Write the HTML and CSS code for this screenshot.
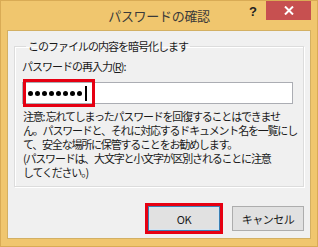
FILE: index.html
```html
<!DOCTYPE html>
<html lang="ja">
<head>
  <meta charset="UTF-8">
  <title>パスワードの確認</title>
  <link rel="stylesheet" href="styles.css">
</head>
<body>
  <div class="window">
    <div class="titlebar">
      <div></div>
      <div class="title">パスワードの確認</div>
      <div class="controls">
        <span class="help">?</span>
        <span class="close">
          <svg width="10" height="9" viewBox="0 0 10 9">
            <path d="M1 0.5 L9 8.5 M9 0.5 L1 8.5" stroke="#fff" stroke-width="2"/>
          </svg>
        </span>
      </div>
    </div>

    <div class="client">
      <fieldset class="group">
        <legend>このファイルの内容を暗号化します</legend>
        <div class="field-label">パスワードの再入力(<u>R</u>):</div>
        <div class="input">
          <span class="dot"></span><span class="dot"></span><span class="dot"></span><span class="dot"></span>
          <span class="dot"></span><span class="dot"></span><span class="dot"></span><span class="dot"></span>
          <span class="caret"></span>
          <div class="mark mark-input"></div>
        </div>
        <p class="note">注意: 忘れてしまったパスワードを回復することはできませ<br>ん。パスワードと、それに対応するドキュメント名を一覧にし<br>て、安全な場所に保管することをお勧めします。<br>(パスワードは、大文字と小文字が区別されることに注意<br>してください。)</p>
      </fieldset>

      <div class="buttons">
        <button class="btn btn-default">OK</button>
        <button class="btn">キャンセル</button>
      </div>
    </div>
  </div>
</body>
</html>
```

FILE: styles.css
```css
body {
  margin: 0;
  font-family: "Noto Sans CJK JP", "Noto Sans", sans-serif;
  font-size: 11px;
  color: #1a1a1a;
}
.window {
  box-sizing: border-box;
  width: 318px;
  height: 247px;
  background-color: #f0c66e;
  border: 1px solid #d9ab55;
  display: flex;
  flex-direction: column;
}
.titlebar {
  height: 29px;
  display: grid;
  grid-template-columns: 1fr auto 1fr;
  align-items: start;
}
.title {
  font-size: 13px;
  letter-spacing: -0.3px;
  color: #3a3a3a;
  margin-top: 5px;
  line-height: 20px;
}
.controls {
  justify-self: end;
  display: flex;
  align-items: flex-start;
  margin-right: 6px;
}
.help {
  font-family: "Liberation Sans", sans-serif;
  font-weight: bold;
  font-size: 13px;
  color: #222;
  margin: 3px 9px 0 0;
}
.close {
  width: 45px;
  height: 19px;
  background-color: #c75050;
  display: flex;
  align-items: center;
  justify-content: center;
}
.client {
  flex: 1;
  margin: 0 6px 7px 6px;
  background-color: #f0f0f0;
  border: 1px solid #d3b063;
  display: flex;
  flex-direction: column;
}
.group {
  margin: 8px 6px 0 6px;
  padding: 0 10px 0 7px;
  border: 1px solid #dcdcdc;
  box-shadow: inset 1px 1px 0 #fff, 1px 1px 0 #fff;
  height: 148px;
  box-sizing: border-box;
  min-width: 0;
}
.group legend {
  padding: 0 2px;
  margin-left: 4px;
  line-height: 15px;
  letter-spacing: -1px;
}
.field-label {
  margin-top: 5px;
  line-height: 15px;
  letter-spacing: -1px;
}
.input {
  position: relative;
  margin-top: 8px;
  height: 22px;
  box-sizing: border-box;
  background-color: #fff;
  border: 1px solid #abadb3;
  display: flex;
  align-items: center;
  gap: 2px;
  padding-left: 5px;
}
.dot {
  width: 5px;
  height: 5px;
  border-radius: 50%;
  background-color: #000;
}
.caret {
  width: 2px;
  height: 15px;
  background-color: #000;
  margin-left: 1px;
}
.mark {
  position: absolute;
  border: 3px solid #e60012;
  box-sizing: border-box;
}
.mark-input {
  left: 0;
  top: -4px;
  width: 72px;
  height: 28px;
}
.note {
  margin: 5px 0 0 1px;
  line-height: 14px;
  letter-spacing: -1.2px;
  white-space: nowrap;
}
.buttons {
  margin-top: auto;
  margin-bottom: 7px;
  display: flex;
  justify-content: flex-end;
  gap: 12px;
  padding-right: 6px;
}
.btn {
  font-family: inherit;
  font-size: 11px;
  letter-spacing: -0.5px;
  width: 72px;
  height: 25px;
  background-color: #e1e1e1;
  border: 1px solid #adadad;
  color: #1a1a1a;
  padding: 0;
}
.btn-default {
  border-color: #3c7fb1;
  box-shadow: inset 0 0 0 1px #d3e5f3;
  outline: 3px solid #e60012;
  outline-offset: 0;
}
```
